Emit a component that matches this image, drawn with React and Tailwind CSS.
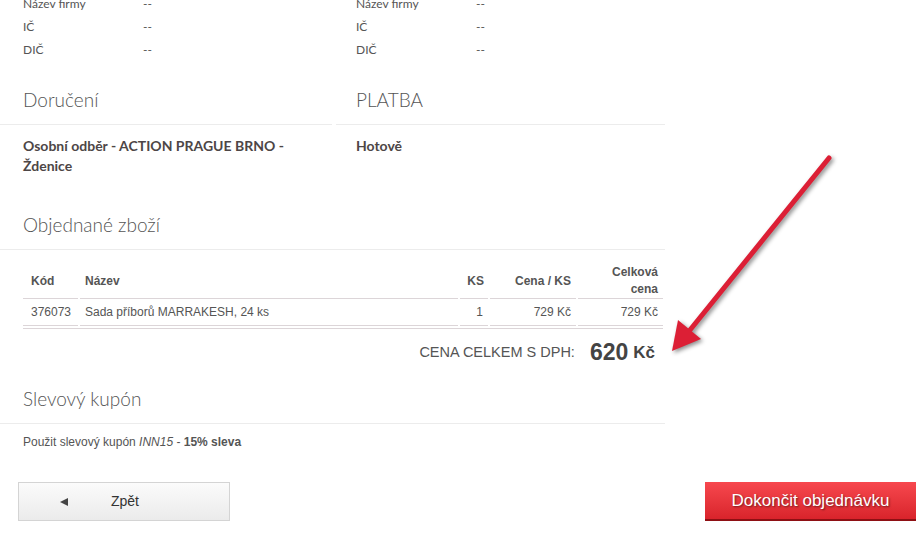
import React from "react"

const heading = "font-['Lato',sans-serif] font-light text-[19px] text-[#555]"

function InfoRows() {
  const rows = [
    ["Název firmy", "--"],
    ["IČ", "--"],
    ["DIČ", "--"],
  ]
  return (
    <div>
      {rows.map(([label, value]) => (
        <div key={label} className="flex h-[23px] items-center text-[12px] text-[#555] font-['Lato',sans-serif]">
          <span className="w-[120px]">{label}</span>
          <span>{value}</span>
        </div>
      ))}
    </div>
  )
}

function SectionHeading({ children, className = "" }) {
  return (
    <div className={`flex h-[48px] items-center border-b border-[#ececec] ${className}`}>
      <span className={heading}>{children}</span>
    </div>
  )
}

export default function App() {
  const items = [{ code: "376073", name: "Sada příborů MARRAKESH, 24 ks", qty: 1, price: "729 Kč", total: "729 Kč" }]

  return (
    <div className="relative w-[920px] h-[545px] overflow-hidden bg-white font-['Liberation_Sans',Arial,sans-serif]">
      <div className="w-[665px] -mt-[8px]">
        {/* Invoice / company rows */}
        <div className="flex gap-[4px]">
          <div className="w-[332px] pl-[23px]">
            <InfoRows />
          </div>
          <div className="flex-1 pl-[20px]">
            <InfoRows />
          </div>
        </div>

        {/* Delivery & payment */}
        <div className="flex gap-[4px] mt-[16px]">
          <div className="w-[332px]">
            <SectionHeading className="pl-[23px]">Doručení</SectionHeading>
            <div className="pl-[23px] pr-[20px] pt-[11px] text-[14px] leading-[20px] font-bold text-[#4d4646] font-['Lato',sans-serif]">
              Osobní odběr - ACTION PRAGUE BRNO - Ždenice
            </div>
          </div>
          <div className="flex-1">
            <SectionHeading className="pl-[20px]">PLATBA</SectionHeading>
            <div className="pl-[20px] pt-[11px] text-[14px] leading-[20px] font-bold text-[#4d4646] font-['Lato',sans-serif]">
              Hotově
            </div>
          </div>
        </div>

        {/* Ordered goods */}
        <SectionHeading className="pl-[23px] mt-[26px]">Objednané zboží</SectionHeading>
        <div className="pl-[23px] pr-[2px] pt-[11px] text-[12px] text-[#555]">
          <div className="grid grid-cols-[55px_378px_28px_86px_85px] gap-x-[2px]">
            <div className="border-b border-[#dcd5d8] pl-[8px] pt-[3px] flex items-center font-bold">Kód</div>
            <div className="border-b border-[#dcd5d8] pl-[5px] pt-[3px] flex items-center font-bold">Název</div>
            <div className="border-b border-[#dcd5d8] pr-[4px] pt-[3px] flex items-center justify-end font-bold">KS</div>
            <div className="border-b border-[#dcd5d8] pr-[5px] pt-[3px] flex items-center justify-end font-bold">Cena / KS</div>
            <div className="border-b border-[#dcd5d8] pr-[5px] pt-[3px] text-right font-bold leading-[17px]">
              Celková
              <br />
              cena
            </div>
            {items.map((it) => (
              <React.Fragment key={it.code}>
                <div className="h-[27px] border-b border-[#dcd5d8] pl-[8px] flex items-center">{it.code}</div>
                <div className="h-[27px] border-b border-[#dcd5d8] pl-[5px] flex items-center">{it.name}</div>
                <div className="h-[27px] border-b border-[#dcd5d8] pr-[5px] flex items-center justify-end">{it.qty}</div>
                <div className="h-[27px] border-b border-[#dcd5d8] pr-[5px] flex items-center justify-end">{it.price}</div>
                <div className="h-[27px] border-b border-[#dcd5d8] pr-[5px] flex items-center justify-end">{it.total}</div>
              </React.Fragment>
            ))}
          </div>
          <div className="mt-[2px] border-t border-[#dcd5d8]"></div>
          <div className="flex h-[47px] items-center justify-end pr-[8px]">
            <span className="text-[14.5px] text-[#555] mr-[15px]">CENA CELKEM S DPH:</span>
            <span className="font-bold text-[#444] text-[23px]">620</span>
            <span className="font-bold text-[#444] text-[17px] ml-[5px]">Kč</span>
          </div>
        </div>

        {/* Coupon */}
        <SectionHeading className="pl-[23px]">Slevový kupón</SectionHeading>
        <div className="pl-[23px] pt-[8px] text-[12px] leading-[20px] text-[#555]">
          Použit slevový kupón <i>INN15</i> - <b>15% sleva</b>
        </div>
      </div>

      {/* Buttons */}
      <div className="flex justify-between pl-[18px] pr-[4px] mt-[30px]">
        <button className="w-[212px] h-[39px] flex items-center border border-[#d4d4d4] bg-gradient-to-b from-[#fbfbfb] to-[#ebebeb] text-[14px] text-[#333]">
          <svg width="10" height="10" viewBox="0 0 10 10" className="ml-[40px]">
            <polygon points="1,5 9,1 9,9" fill="#444" />
          </svg>
          <span className="ml-[42px]">Zpět</span>
        </button>
        <button className="w-[211px] h-[39px] border-b-2 border-[#8e1014] bg-gradient-to-b from-[#f7474e] to-[#d9232b] text-white text-[17px] [text-shadow:1px_1px_2px_rgba(0,0,0,0.5)]">
          Dokončit objednávku
        </button>
      </div>

      {/* Annotation arrow */}
      <svg
        className="absolute left-0 top-0 pointer-events-none [filter:drop-shadow(2px_2px_2px_rgba(0,0,0,0.45))]"
        width="920"
        height="545"
      >
        <line x1="829" y1="158" x2="690" y2="330" stroke="#dc1f35" strokeWidth="5" strokeLinecap="round" />
        <polygon points="672,351 678,320 701,339" fill="#dc1f35" />
      </svg>
    </div>
  )
}
